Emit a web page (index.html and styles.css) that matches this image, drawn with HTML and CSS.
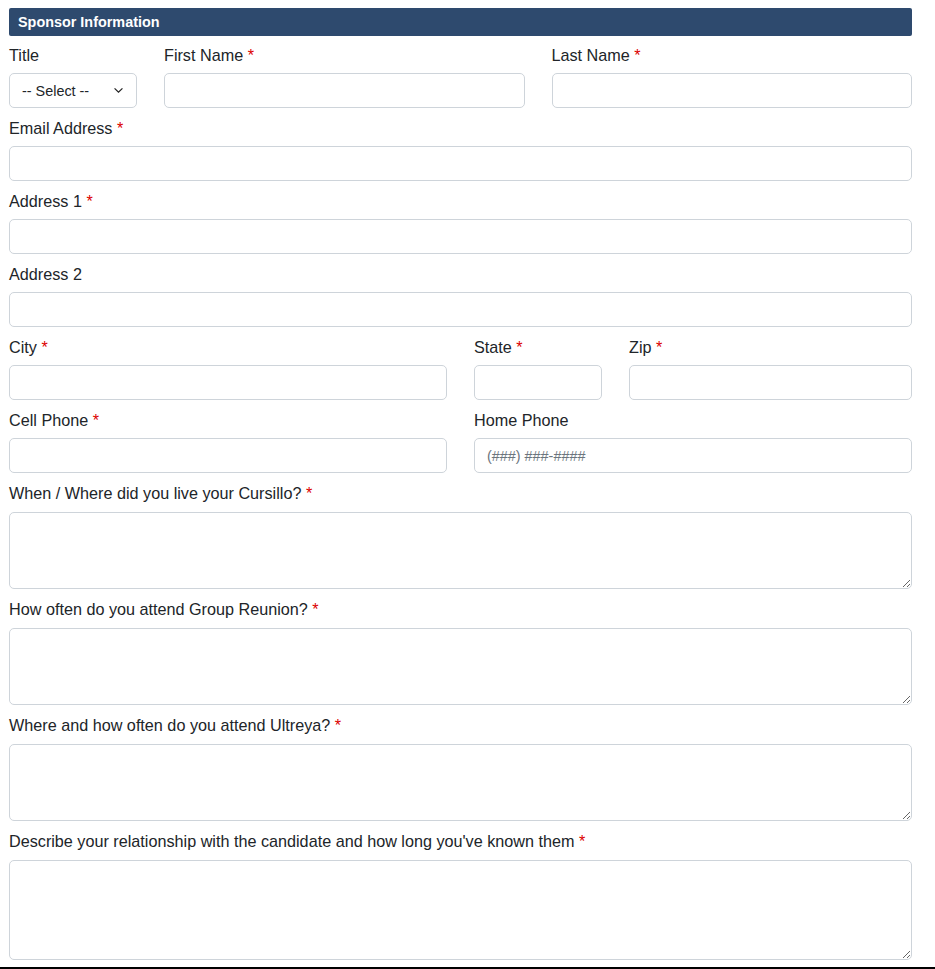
FILE: index.html
```html
<!DOCTYPE html>
<html lang="en">
<head>
    <meta charset="UTF-8">
    <meta name="viewport" content="width=device-width, initial-scale=1.0">
    <title>Sponsor Information</title>
    <link rel="stylesheet" href="styles.css">
</head>
<body>

    <div class="form-wrap">
        <!-- Section header -->
        <div class="section-title">Sponsor Information</div>

        <div class="row row-name">
            <div class="form-group">
                <label for="title">Title</label>
                <select id="title" class="form-control select">
                    <option>-- Select --</option>
                    <option>Mr.</option>
                    <option>Mrs.</option>
                    <option>Ms.</option>
                </select>
            </div>
            <div class="form-group">
                <label for="firstName">First Name <span class="req">*</span></label>
                <input type="text" id="firstName" class="form-control">
            </div>
            <div class="form-group">
                <label for="lastName">Last Name <span class="req">*</span></label>
                <input type="text" id="lastName" class="form-control">
            </div>
        </div>

        <div class="form-group">
            <label for="email">Email Address <span class="req">*</span></label>
            <input type="email" id="email" class="form-control">
        </div>

        <div class="form-group">
            <label for="address1">Address 1 <span class="req">*</span></label>
            <input type="text" id="address1" class="form-control">
        </div>

        <div class="form-group">
            <label for="address2">Address 2</label>
            <input type="text" id="address2" class="form-control">
        </div>

        <div class="row row-city">
            <div class="form-group">
                <label for="city">City <span class="req">*</span></label>
                <input type="text" id="city" class="form-control">
            </div>
            <div class="form-group">
                <label for="state">State <span class="req">*</span></label>
                <input type="text" id="state" class="form-control">
            </div>
            <div class="form-group">
                <label for="zip">Zip <span class="req">*</span></label>
                <input type="text" id="zip" class="form-control">
            </div>
        </div>

        <div class="row row-phone">
            <div class="form-group">
                <label for="cellPhone">Cell Phone <span class="req">*</span></label>
                <input type="tel" id="cellPhone" class="form-control">
            </div>
            <div class="form-group">
                <label for="homePhone">Home Phone</label>
                <input type="tel" id="homePhone" class="form-control" placeholder="(###) ###-####">
            </div>
        </div>

        <div class="form-group form-group-text">
            <label for="cursillo">When / Where did you live your Cursillo? <span class="req">*</span></label>
            <textarea id="cursillo" class="form-control textarea"></textarea>
        </div>

        <div class="form-group form-group-text">
            <label for="reunion">How often do you attend Group Reunion? <span class="req">*</span></label>
            <textarea id="reunion" class="form-control textarea"></textarea>
        </div>

        <div class="form-group form-group-text">
            <label for="ultreya">Where and how often do you attend Ultreya? <span class="req">*</span></label>
            <textarea id="ultreya" class="form-control textarea"></textarea>
        </div>

        <div class="form-group form-group-text">
            <label for="relationship">Describe your relationship with the candidate and how long you've known them <span class="req">*</span></label>
            <textarea id="relationship" class="form-control textarea textarea-lg"></textarea>
        </div>
    </div>

    <hr class="page-end">

</body>
</html>
```

FILE: styles.css
```css
body {
    font-family: "Liberation Sans", Arial, Helvetica, sans-serif;
    margin: 0;
    padding: 0;
    background-color: #fff;
    color: #212529;
    font-size: 16.2px;
    line-height: 24px;
}
.form-wrap {
    width: 903px;
    margin-left: 9px;
    padding-top: 8px;
}
/* Header bar */
.section-title {
    background-color: #2e4a6e;
    color: #fff;
    font-weight: bold;
    font-size: 14.4px;
    line-height: 28px;
    height: 28px;
    padding-left: 9px;
    border-radius: 2px;
    margin-bottom: 6px;
}
.row {
    display: grid;
    column-gap: 27px;
}
.row-name {
    grid-template-columns: 128px 1fr 1fr;
}
.row-city {
    grid-template-columns: 438px 128px 1fr;
}
.row-phone {
    grid-template-columns: 1fr 1fr;
}
.form-group {
    margin-bottom: 7px;
}
.form-group label {
    display: block;
    padding-top: 1px;
    margin-bottom: 6px;
    line-height: 24px;
}
/* textarea groups sit a pixel lower under their label */
.form-group-text label {
    margin-bottom: 7px;
}
.req {
    color: #dc0000;
}
.form-control {
    display: block;
    box-sizing: border-box;
    width: 100%;
    height: 35px;
    padding: 6px 12px;
    font-family: inherit;
    font-size: 14.4px;
    color: #212529;
    background-color: #fff;
    border: 1px solid #ced4da;
    border-radius: 5px;
    margin: 0;
}
.form-control::placeholder {
    color: #6c757d;
}
.select {
    appearance: none;
    -webkit-appearance: none;
    padding-right: 30px;
    background-image: url("data:image/svg+xml,%3Csvg xmlns='http://www.w3.org/2000/svg' width='12' height='8' viewBox='0 0 12 8'%3E%3Cpath d='M1.5 1.5l4.5 4.5 4.5-4.5' fill='none' stroke='%23222' stroke-width='1.4'/%3E%3C/svg%3E");
    background-repeat: no-repeat;
    background-position: right 12px center;
    background-size: 11px 7px;
}
.textarea {
    height: 77px;
    resize: vertical;
}
.textarea-lg {
    height: 100px;
}
.page-end {
    margin: 0;
    border: none;
    border-top: 2px solid #000;
}
```
